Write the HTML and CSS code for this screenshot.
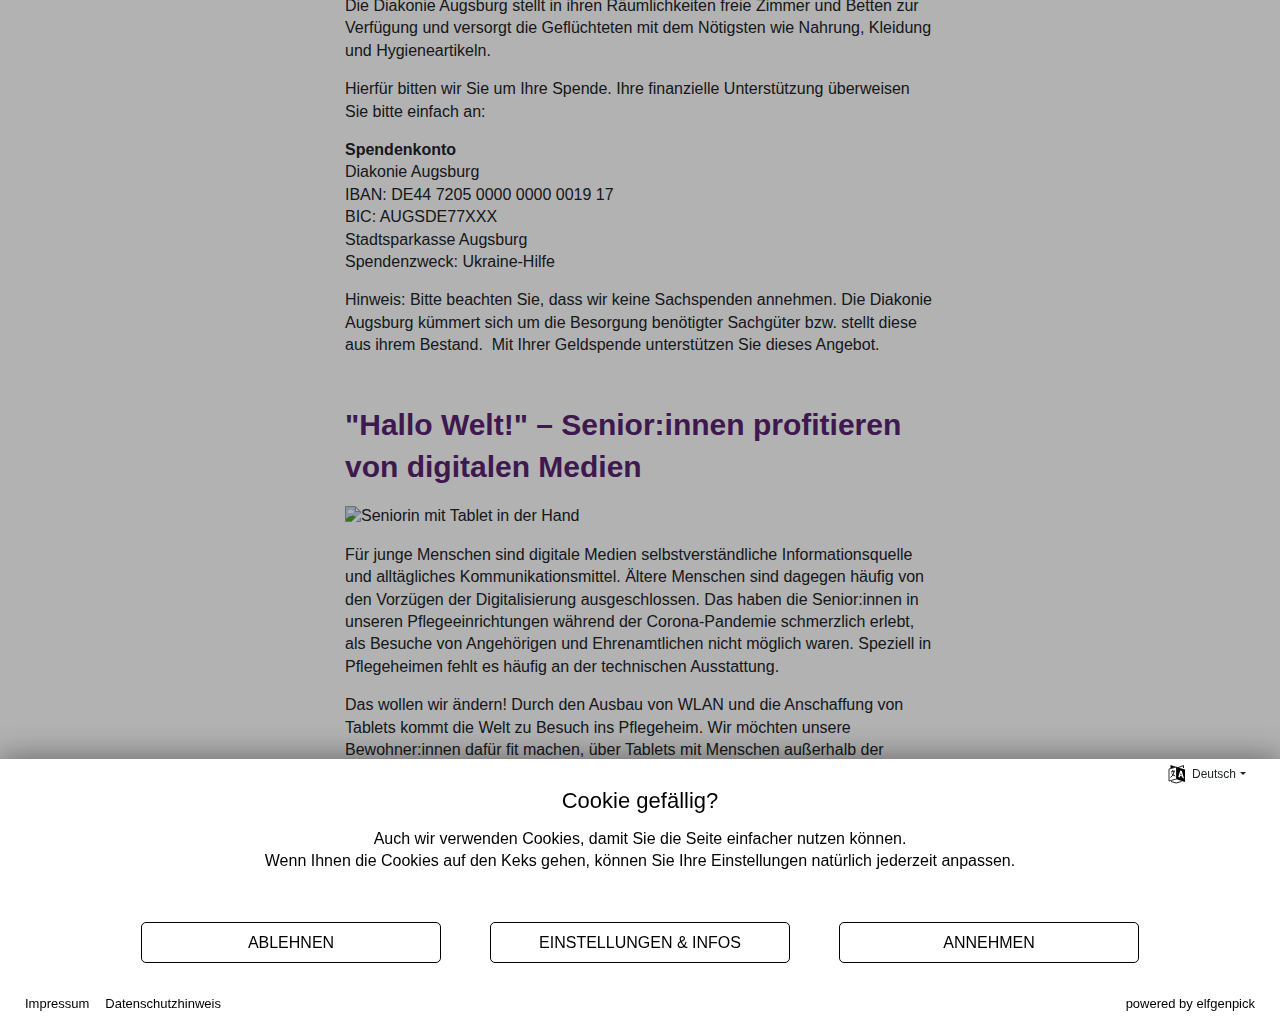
FILE: index.html
```html
<!DOCTYPE html>
<html lang="de">
<head>
<meta charset="utf-8">
<meta name="viewport" content="width=device-width, initial-scale=1">
<title>Diakonie Augsburg</title>
<link rel="stylesheet" href="styles.css">
</head>
<body>
<main class="page">
  <article class="article">
    <p>Die Diakonie Augsburg stellt in ihren Räumlichkeiten freie Zimmer und Betten zur Verfügung und versorgt die Geflüchteten mit dem Nötigsten wie Nahrung, Kleidung und Hygieneartikeln.</p>
    <p>Hierfür bitten wir Sie um Ihre Spende. Ihre finanzielle Unterstützung überweisen Sie bitte einfach an:</p>
    <p><strong>Spendenkonto</strong><br>Diakonie Augsburg<br>IBAN: DE44 7205 0000 0000 0019 17<br>BIC: AUGSDE77XXX<br>Stadtsparkasse Augsburg<br>Spendenzweck: Ukraine-Hilfe</p>
    <p>Hinweis: Bitte beachten Sie, dass wir keine Sachspenden annehmen. Die Diakonie Augsburg kümmert sich um die Besorgung benötigter Sachgüter bzw. stellt diese aus ihrem Bestand.&nbsp; Mit Ihrer Geldspende unterstützen Sie dieses Angebot.</p>
  </article>
  <article class="article">
    <h2 class="article-title">"Hallo Welt!" – Senior:innen profitieren von digitalen Medien</h2>
    <p class="figure"><svg class="figure-icon" width="16" height="16" viewBox="0 0 16 16" aria-hidden="true">
      <path d="M.5.5h10l5 5v10H.5z" fill="#c3d5f6"/>
      <path d="M3 7a1.500 1.500 0 0 1 1-2.500 2 2 0 0 1 3.500 0A1.300 1.300 0 0 1 8 7z" fill="#fff"/>
      <path d="M1 15v-2.500Q5 9.500 8.500 9.500L11 11l-4 4z" fill="#4fa72e"/>
      <path d="M.5 15.500V.5h10l5 5v2.500M.5 15.500H7M11 15.500h4.500V12" fill="none" stroke="#a0a0a8"/>
      <path d="M10.500 1v4.500H15z" fill="#fff" stroke="#a0a0a8"/>
      <path d="M6.500 16 16 7v3.500L10.500 16z" fill="#fff"/>
    </svg>Seniorin mit Tablet in der Hand</p>
    <p>Für junge Menschen sind digitale Medien selbstverständliche Informationsquelle und alltägliches Kommunikationsmittel. Ältere Menschen sind dagegen häufig von den Vorzügen der Digitalisierung ausgeschlossen. Das haben die Senior:innen in unseren Pflegeeinrichtungen während der Corona-Pandemie schmerzlich erlebt, als Besuche von Angehörigen und Ehrenamtlichen nicht möglich waren. Speziell in Pflegeheimen fehlt es häufig an der technischen Ausstattung.</p>
    <p>Das wollen wir ändern! Durch den Ausbau von WLAN und die Anschaffung von Tablets kommt die Welt zu Besuch ins Pflegeheim. Wir möchten unsere Bewohner:innen dafür fit machen, über Tablets mit Menschen außerhalb der</p>
  </article>
</main>
<div class="backdrop"></div>
<section class="consent" role="dialog" aria-labelledby="consent-title">
  <div class="consent-top">
    <button class="language" type="button">
      <svg class="language-icon" width="18" height="20" viewBox="0 0 18 20" aria-hidden="true">
        <path d="M9 4 15.500 1.500V4" fill="none" stroke="#222"/>
        <path d="M2.500 1 9 3.200 2.500 5z" fill="#000"/>
        <path d="M1 5 8.500 3v12L1 17z" fill="#fff" stroke="#333"/>
        <path d="M8.500 3 17 5.500V18l-8.500-2.800z" fill="#000"/>
        <path fill-rule="evenodd" d="m12.200 6.500 1.600.4 2.200 7.600-1.400-.4-.4-1.500-2.100-.5-.4 1.300-1.400-.4zm.7 2.500-.6 2 1.400.4z" fill="#fff"/>
        <path d="m3 8 3.800-1M4.500 6l.6 1.200M6.200 7.300Q5.500 11.500 2.500 13.500M3.800 9.500q1.200 2 3.400 2.500" fill="none" stroke="#111"/>
        <path d="M3 17.500q5 3 10.500 0" fill="none" stroke="#222"/>
      </svg>
      <span>Deutsch</span>
      <svg class="caret" width="6" height="4" viewBox="0 0 6 4" aria-hidden="true"><path d="M0 0h6L3 3z" fill="#222"/></svg>
    </button>
  </div>
  <h1 class="consent-title" id="consent-title">Cookie gefällig?</h1>
  <p class="consent-text">Auch wir verwenden Cookies, damit Sie die Seite einfacher nutzen können.<br>Wenn Ihnen die Cookies auf den Keks gehen, können Sie Ihre Einstellungen natürlich jederzeit anpassen.</p>
  <div class="actions">
    <button class="action" type="button">ABLEHNEN</button>
    <button class="action" type="button">EINSTELLUNGEN &amp; INFOS</button>
    <button class="action" type="button">ANNEHMEN</button>
  </div>
  <footer class="consent-footer">
    <nav class="legal"><a href="#impressum">Impressum</a><a href="#datenschutz">Datenschutzhinweis</a></nav>
    <a href="#elfgenpick">powered by elfgenpick</a>
  </footer>
</section>
</body>
</html>
```
FILE: styles.css
```css
* { box-sizing: border-box; }
html { height: 100%; }
body {
  height: 100%;
  margin: 0;
  overflow: hidden;
  background: #fff;
  color: #212529;
  font-family: "Liberation Sans", Arial, sans-serif;
  font-size: 16px;
  line-height: 1.4;
}
.page {
  max-width: 590px;
  margin: -5px auto 0;
}
.article { margin-bottom: 48px; }
.article p { margin: 0 0 16px; }
.article-title {
  margin: 0 0 17px;
  color: #5a2472;
  font-size: 30px;
  line-height: 42px;
}
.figure-icon { vertical-align: -1px; }
.backdrop {
  position: fixed;
  inset: 0;
  background: rgba(0, 0, 0, 0.3);
}
.consent {
  position: fixed;
  left: 0;
  right: 0;
  bottom: 0;
  padding: 5px 25px 8px;
  background: #fff;
  color: #000;
  box-shadow: 0 0 30px rgba(0, 0, 0, 0.45);
  text-align: center;
}
.consent-top {
  display: flex;
  justify-content: flex-end;
  padding-right: 9px;
}
.language {
  display: flex;
  align-items: center;
  padding: 0;
  border: 0;
  background: none;
  color: #212529;
  font: 12px/20px "Liberation Sans", Arial, sans-serif;
}
.language-icon { margin-right: 6px; }
.caret { margin-left: 4px; }
.consent-title {
  margin: 0;
  font-size: 22px;
  font-weight: 400;
  line-height: 34px;
}
.consent-text {
  margin: 10px 0 50px;
  line-height: 22px;
}
.actions {
  display: flex;
  justify-content: center;
  gap: 49px;
}
.action {
  flex: 0 1 300px;
  height: 41px;
  padding: 0;
  border: 1px solid #000;
  border-radius: 5px;
  background: #fff;
  color: #000;
  font: 16px "Liberation Sans", Arial, sans-serif;
}
.consent-footer {
  display: flex;
  justify-content: space-between;
  margin-top: 29px;
  font-size: 13px;
  line-height: 24px;
}
.consent-footer a {
  color: #000;
  text-decoration: none;
}
.legal {
  display: flex;
  gap: 16px;
}
```
